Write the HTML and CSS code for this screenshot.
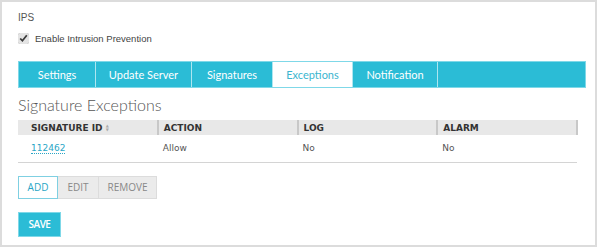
FILE: index.html
```html
<!DOCTYPE html>
<html lang="en">
<head>
    <meta charset="UTF-8">
    <title>IPS</title>
    <link rel="stylesheet" href="styles.css">
</head>
<body>
<div class="panel">
    <div class="title">IPS</div>

    <label class="enable">
        <input type="checkbox" checked>
        <span>Enable Intrusion Prevention</span>
    </label>

    <!-- tabs -->
    <div class="tabs">
        <div class="tab">Settings</div>
        <div class="tab">Update Server</div>
        <div class="tab">Signatures</div>
        <div class="tab active">Exceptions</div>
        <div class="tab">Notification</div>
        <div class="tab-fill"></div>
    </div>

    <h2>Signature Exceptions</h2>

    <table class="grid">
        <thead>
            <tr>
                <th class="first">SIGNATURE ID <span class="sort">&#9650;<br>&#9660;</span></th>
                <th>ACTION</th>
                <th>LOG</th>
                <th>ALARM</th>
            </tr>
        </thead>
        <tbody>
            <tr>
                <td class="first"><a href="#">112462</a></td>
                <td>Allow</td>
                <td>No</td>
                <td>No</td>
            </tr>
        </tbody>
    </table>

    <div class="btn-group">
        <button class="btn selected">ADD</button>
        <button class="btn">EDIT</button>
        <button class="btn">REMOVE</button>
    </div>

    <button class="save">SAVE</button>
</div>
</body>
</html>
```

FILE: styles.css
```css
* {
    box-sizing: border-box;
}

body {
    margin: 0;
    background: #fff;
    font-family: "Liberation Sans", Arial, sans-serif;
}

.panel {
    width: 597px;
    height: 247px;
    border: 2px solid #dcdcdc;
    padding: 9px 9px 0 16px;
    color: #555;
}

.title {
    font-size: 10px;
    line-height: 14px;
}

.enable {
    display: flex;
    align-items: center;
    margin-top: 8px;
    font-size: 9.5px;
    color: #444;
}

.enable input {
    width: 11px;
    height: 11px;
    margin: 0 6px 0 0;
    accent-color: #e4e4e4;
}

.tabs {
    display: flex;
    width: 568px;
    height: 27px;
    margin-top: 17px;
    background: #2bbcd6;
    border: 1px solid #7fd8e8;
}

.tab {
    display: flex;
    align-items: center;
    justify-content: center;
    font-family: Lato, sans-serif;
    font-size: 11px;
    color: #fff;
    border-right: 1px solid #aee6f0;
}

.tab:nth-child(1) { width: 77px; }
.tab:nth-child(2) { width: 96px; }
.tab:nth-child(3) { width: 81px; }
.tab:nth-child(4) { width: 80px; }
.tab:nth-child(5) { width: 85px; }

.tab.active {
    background: #fff;
    color: #3bb6cf;
}

.tab-fill {
    flex: 1;
}

h2 {
    margin: 8px 0 6px;
    font-family: Lato, sans-serif;
    font-weight: 300;
    font-size: 16px;
    line-height: 18px;
    color: #555;
}

.grid {
    width: 560px;
    border-collapse: collapse;
    table-layout: fixed;
    font-family: "DejaVu Sans", Verdana, sans-serif;
    font-size: 9px;
}

.grid th {
    height: 15px;
    padding: 0 5px;
    text-align: left;
    background: #e8e8e8;
    color: #333;
    font-weight: bold;
    border-right: 2px solid #c8c8c8;
}

.grid th.first,
.grid td.first {
    padding-left: 13px;
}

.sort {
    display: inline-block;
    vertical-align: middle;
    font-size: 4px;
    line-height: 4px;
    color: #aaa;
}

.grid td {
    height: 27px;
    padding: 0 5px;
    color: #555;
    border-bottom: 1px solid #d4d4d4;
}

.grid a {
    color: #2aa6c6;
    text-decoration: none;
    border-bottom: 1px dotted #2aa6c6;
}

.btn-group {
    display: flex;
    margin-top: 13px;
}

.btn {
    height: 23px;
    padding: 0;
    font-family: "Open Sans", sans-serif;
    font-size: 10px;
    color: #888;
    background: #ebebeb;
    border: 1px solid #dcdcdc;
    border-left: none;
}

.btn:nth-child(1) { width: 40px; }
.btn:nth-child(2) { width: 41px; }
.btn:nth-child(3) { width: 58px; }

.btn.selected {
    background: #fff;
    color: #2aa6c6;
    border: 1px solid #7fd0e2;
}

.save {
    display: block;
    width: 43px;
    height: 25px;
    margin-top: 13px;
    padding: 0;
    font-family: "Open Sans", sans-serif;
    font-size: 10px;
    font-weight: 600;
    letter-spacing: -0.5px;
    color: #fff;
    background: #2bbcd6;
    border: 1px solid #7fd8e8;
}
```
